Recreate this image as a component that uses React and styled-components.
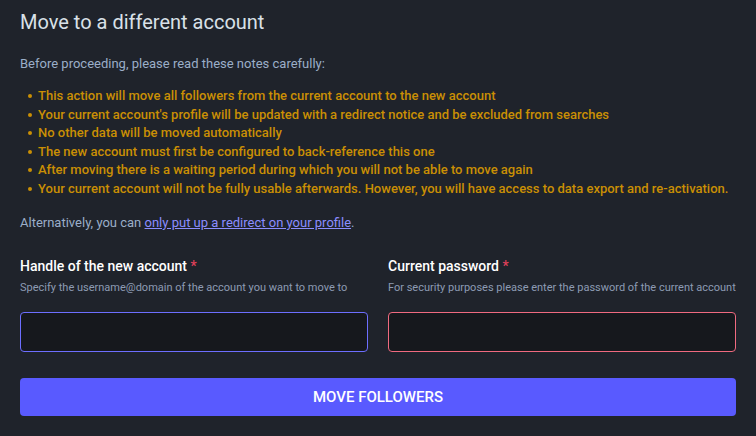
import styled, { createGlobalStyle } from 'styled-components';

const GlobalStyle = createGlobalStyle`
    html, body {
        margin: 0;
        padding: 0;
        background: #1f232b;
    }
    body {
        font-family: Roboto, "Liberation Sans", sans-serif;
        -webkit-font-smoothing: antialiased;
    }
`;

const notes = [
    'This action will move all followers from the current account to the new account',
    "Your current account's profile will be updated with a redirect notice and be excluded from searches",
    'No other data will be moved automatically',
    'The new account must first be configured to back-reference this one',
    'After moving there is a waiting period during which you will not be able to move again',
    'Your current account will not be fully usable afterwards. However, you will have access to data export and re-activation.',
];

const App = () => {
    return <Page>
        <GlobalStyle />
        <Title>Move to a different account</Title>
        <Intro>Before proceeding, please read these notes carefully:</Intro>
        <Notes>
            {notes.map((note) => <Note key={note}>{note}</Note>)}
        </Notes>
        <Intro>
            Alternatively, you can <RedirectLink href="#">only put up a redirect on your profile</RedirectLink>.
        </Intro>
        <Fields>
            <Field>
                <Label>Handle of the new account <Required>*</Required></Label>
                <Hint>Specify the username@domain of the account you want to move to</Hint>
                <Input type="text" $tone="focus" />
            </Field>
            <Field>
                <Label>Current password <Required>*</Required></Label>
                <Hint>For security purposes please enter the password of the current account</Hint>
                <Input type="password" $tone="error" />
            </Field>
        </Fields>
        <SubmitButton type="button">Move followers</SubmitButton>
    </Page>;
};

const Page = styled.div`
    padding: 10px 20px 20px;
    box-sizing: border-box;
    width: 756px;
    min-height: 436px;
    background: #1f232b;
`;

const Title = styled.h2`
    margin: 0;
    font-size: 20px;
    line-height: 24px;
    font-weight: 400;
    color: #d9e1e8;
`;

const Intro = styled.p`
    margin: 21px 0 0;
    font-size: 13px;
    line-height: 18px;
    color: #9baec8;

    & + ul {
        margin-top: 14px;
    }

    ul + & {
        margin-top: 16px;
    }
`;

const Notes = styled.ul`
    margin: 0;
    padding: 0 0 0 18px;
    list-style: none;
`;

const Note = styled.li`
    position: relative;
    font-size: 13px;
    line-height: 18.5px;
    font-weight: 500;
    color: #ca8f04;

    &::before {
        content: '';
        position: absolute;
        left: -10px;
        top: 7px;
        width: 4px;
        height: 4px;
        border-radius: 50%;
        background: #ca8f04;
    }
`;

const RedirectLink = styled.a`
    color: #8c8dff;
    text-decoration: underline;
`;

const Fields = styled.div`
    display: grid;
    grid-template-columns: 1fr 1fr;
    column-gap: 20px;
    margin-top: 24px;
`;

const Field = styled.div`
    display: flex;
    flex-direction: column;
`;

const Label = styled.label`
    font-size: 14px;
    line-height: 20px;
    font-weight: 500;
    color: #ffffff;
`;

const Required = styled.span`
    color: #df405a;
`;

const Hint = styled.span`
    margin-top: 4px;
    font-size: 11px;
    line-height: 16px;
    color: #8d9bb3;
`;

const Input = styled.input`
    margin-top: 16px;
    box-sizing: border-box;
    height: 40px;
    width: 100%;
    background: #16181d;
    border: 1px solid ${(props) => (props.$tone === 'error' ? '#f06a80' : '#6d6eff')};
    border-radius: 4px;
    outline: none;
    padding: 10px;
    color: #fff;
    font-family: inherit;
    font-size: 14px;
`;

const SubmitButton = styled.button`
    display: block;
    width: 100%;
    height: 38px;
    margin-top: 26px;
    border: 0;
    border-radius: 4px;
    background: #595aff;
    color: #ffffff;
    font-family: inherit;
    font-size: 15px;
    font-weight: 500;
    text-transform: uppercase;
    cursor: pointer;
`;

export default App;
